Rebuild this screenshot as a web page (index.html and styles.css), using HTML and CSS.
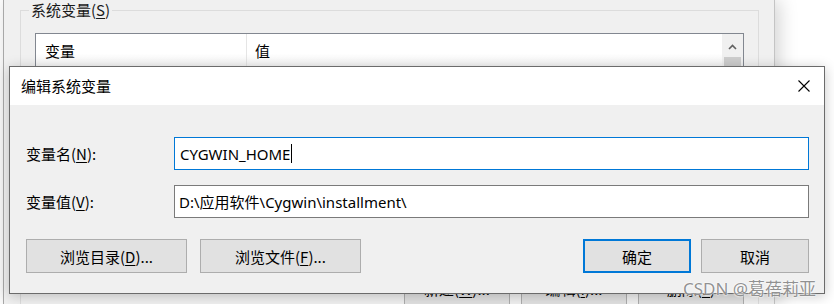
FILE: index.html
```html
<!DOCTYPE html>
<html lang="zh-CN">
<head>
<meta charset="utf-8">
<title>编辑系统变量</title>
<link rel="stylesheet" href="styles.css">
</head>
<body>
<div class="bgwin">
  <fieldset class="group">
    <legend>系统变量(<u>S</u>)</legend>
    <div class="list">
      <div class="list-body">
        <div class="list-head">
          <div class="col col-name">变量</div>
          <div class="col col-val">值</div>
        </div>
      </div>
      <div class="scroll">
        <svg class="arrow" width="9" height="6" viewBox="0 0 9 6"><path d="M1 5 L4.5 1.5 L8 5" fill="none" stroke="#606060" stroke-width="1.6"/></svg>
        <div class="thumb"></div>
      </div>
    </div>
    <div class="group-buttons">
      <button class="btn small">新建(<u>W</u>)...</button>
      <button class="btn small">编辑(<u>I</u>)...</button>
      <button class="btn small">删除(<u>L</u>)</button>
    </div>
  </fieldset>
</div>

<div class="dialog">
  <div class="titlebar">
    <span class="title">编辑系统变量</span>
    <svg class="close" width="12" height="12" viewBox="0 0 12 12"><path d="M0.5 0.5 L11.5 11.5 M11.5 0.5 L0.5 11.5" stroke="#000" stroke-width="1.1" fill="none"/></svg>
  </div>
  <div class="dbody">
    <div class="form">
      <label class="lbl">变量名(<u>N</u>):</label>
      <div class="field focus"><span class="val">CYGWIN_HOME</span><span class="caret"></span></div>
      <label class="lbl">变量值(<u>V</u>):</label>
      <div class="field"><span class="val">D:\应用软件\Cygwin\installment\</span></div>
    </div>
    <div class="actions">
      <div class="left-actions">
        <button class="btn wide">浏览目录(<u>D</u>)...</button>
        <button class="btn wide">浏览文件(<u>F</u>)...</button>
      </div>
      <div class="right-actions">
        <button class="btn ok default">确定</button>
        <button class="btn ok">取消</button>
      </div>
    </div>
  </div>
</div>

<div class="watermark">CSDN @葛蓓莉亚</div>
</body>
</html>
```

FILE: styles.css
```css
* { box-sizing: border-box; }

html, body {
  margin: 0;
  padding: 0;
}

body {
  width: 834px;
  height: 304px;
  overflow: hidden;
  position: relative;
  background: #ffffff;
  font-family: "Noto Sans CJK SC", "Noto Sans", sans-serif;
  font-size: 15px;
  color: #000;
}

u { text-decoration: underline; text-underline-offset: 2px; }

/* background window */
.bgwin {
  margin-left: 3px;
  width: 772px;
  height: 304px;
  overflow: hidden;
  background: #f0f0f0;
  border-left: 1px solid #a8a8a8;
  border-right: 1px solid #c4c4c4;
  box-shadow: 4px 0 18px rgba(0, 0, 0, 0.18);
}

.group {
  margin: 0 0 0 16px;
  width: 739px;
  padding: 0 14px 20px 14px;
  border: 1px solid #dcdcdc;
  min-inline-size: 0;
}

.group legend {
  margin-left: -6px;
  padding: 0 2px;
  line-height: 20px;
  height: 20px;
  color: #1a1a1a;
}

.list {
  margin-top: 13px;
  height: 230px;
  border: 1px solid #828790;
  background: #ffffff;
  display: flex;
}

.list-body { flex: 1; }

.list-head {
  display: flex;
  height: 32px;
  background: linear-gradient(#ffffff 60%, #f4f4f4);
}

.col {
  display: flex;
  align-items: center;
}

.col-name {
  width: 211px;
  padding-left: 9px;
  border-right: 1px solid #e5e5e5;
}

.col-val { padding-left: 8px; }

.scroll {
  width: 21px;
  background: #f0f0f0;
  display: flex;
  flex-direction: column;
  align-items: center;
}

.arrow { margin-top: 10px; }

.thumb {
  margin-top: 7px;
  width: 17px;
  height: 60px;
  background: #cdcdcd;
}

.group-buttons {
  margin-top: 8px;
  display: flex;
  justify-content: flex-end;
  gap: 11px;
}

.btn {
  font: inherit;
  color: #000;
  background: #e1e1e1;
  border: 1px solid #adadad;
  height: 34px;
  padding: 0;
  display: flex;
  align-items: center;
  justify-content: center;
}

.btn.small { width: 106px; }

/* dialog */
.dialog {
  position: absolute;
  left: 9px;
  top: 66px;
  width: 816px;
  height: 228px;
  border: 1px solid #6b6b6b;
  background: #f0f0f0;
  box-shadow: 0 2px 12px rgba(0, 0, 0, 0.22);
}

.titlebar {
  height: 38px;
  background: #ffffff;
  display: flex;
  align-items: center;
  justify-content: space-between;
  padding: 0 14px 0 11px;
}

.title { line-height: 20px; }

.dbody {
  padding: 32px 15px 20px 16px;
}

.form {
  display: grid;
  grid-template-columns: 148px 1fr;
  row-gap: 15px;
  align-items: center;
}

.lbl { color: #000; }

.field {
  height: 33px;
  background: #ffffff;
  border: 1px solid #7a7a7a;
  display: flex;
  align-items: center;
  padding-left: 4px;
  font-family: "Noto Sans", "Noto Sans CJK SC", sans-serif;
  font-size: 15px;
  color: #000;
}

.field.focus {
  border-color: #0078d7;
  padding-left: 5px;
}

.caret {
  display: inline-block;
  width: 1px;
  height: 19px;
  background: #000;
  margin-left: 1px;
}

.actions {
  margin-top: 21px;
  display: flex;
  justify-content: space-between;
}

.left-actions { display: flex; gap: 13px; }
.right-actions { display: flex; gap: 10px; }

.btn.wide { width: 161px; }
.btn.ok { width: 108px; }

.btn.default {
  border: 2px solid #0078d7;
}

.watermark {
  position: absolute;
  left: 683px;
  top: 277px;
  font-family: "Noto Sans", "Noto Sans CJK SC", sans-serif;
  font-size: 17px;
  line-height: 24px;
  color: rgba(110, 110, 110, 0.75);
  text-shadow: 0 0 2px #ffffff, 0 0 2px #ffffff;
  white-space: nowrap;
}
```
